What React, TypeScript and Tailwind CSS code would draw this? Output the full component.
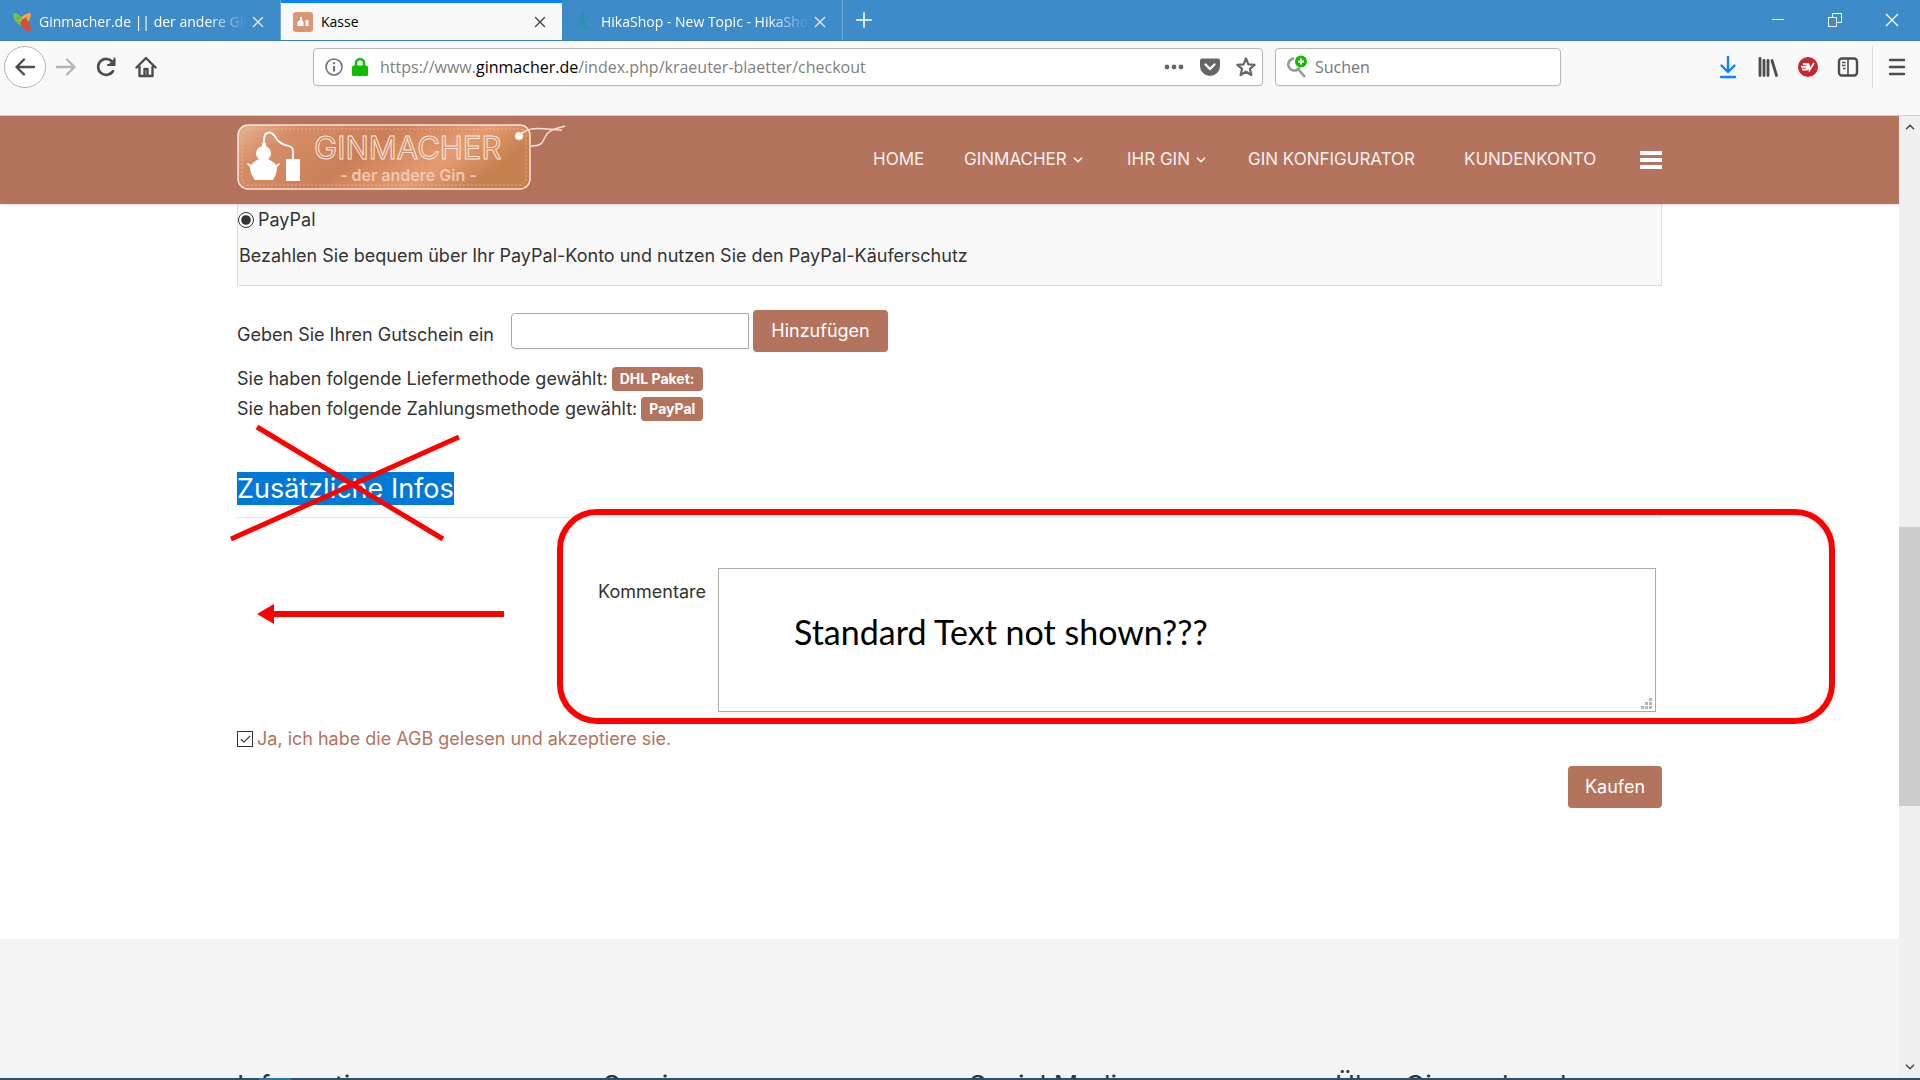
import { useState } from 'react';
import type { ReactNode } from 'react';
import { Check, ChevronDown, ChevronUp, Plus, X } from 'lucide-react';

function JoomlaIcon() {
  return (
    <svg width="20" height="20" viewBox="0 0 20 20" fill="none" strokeWidth="3" strokeLinecap="round" strokeLinejoin="round">
      <path d="M3 17 C3 14 4 12 7 10 M3 17 C6 17 7 15 9 13" stroke="#4a86cf" />
      <path d="M17 3 C13 3 12 5 8 8 M17 3 C17 6 16 8 14 9" stroke="#f9a541" />
      <path d="M3 3 C3 7 4 8 8 12 M3 3 C6 3 7 5 9 7" stroke="#7ac143" />
      <path d="M17 17 C17 13 16 11 12 8 M17 17 C13 17 13 15 10 12 L14 8" stroke="#f44321" />
      <g strokeWidth="4">
        <path d="M3 3h.1" stroke="#7ac143" />
        <path d="M17 3h.1" stroke="#f9a541" />
        <path d="M17 17h.1" stroke="#f44321" />
        <path d="M3 17h.1" stroke="#4a86cf" />
      </g>
    </svg>
  );
}

function StillIcon() {
  return (
    <svg width="20" height="20" viewBox="0 0 20 20">
      <rect width="20" height="20" rx="3" fill="#dc9672" />
      <path d="M7 5h2v3l1.500 2v4h-6v-4L7 8zM12.500 8h3v6h-3z" fill="#fff" />
    </svg>
  );
}

function HikaIcon() {
  return (
    <svg width="18" height="20" viewBox="0 0 18 20" fill="none" stroke="#2a93a8" strokeWidth="1.500" strokeLinecap="round">
      <path d="M9 1v9M4 4l2 3M14 3l-2 4M2 10l13-2M8 10L3 17M10 10v6l6 1M6 14l6-1" />
    </svg>
  );
}

function BackIcon() {
  return (
    <svg width="22" height="22" viewBox="0 0 22 22" fill="none" stroke="currentColor" strokeWidth="2.400" strokeLinecap="round" strokeLinejoin="round">
      <path d="M20 11H2.500M10 3.500L2.500 11l7.500 7.500" />
    </svg>
  );
}

function ForwardIcon() {
  return (
    <svg width="22" height="22" viewBox="0 0 22 22" fill="none" stroke="currentColor" strokeWidth="2.400" strokeLinecap="round" strokeLinejoin="round">
      <path d="M2 11h17.500M12 3.500l7.500 7.500-7.500 7.500" />
    </svg>
  );
}

function ReloadIcon() {
  return (
    <svg width="22" height="22" viewBox="0 0 22 22" fill="none" stroke="currentColor" strokeWidth="2.600" strokeLinecap="round">
      <path d="M17.800 6.500A8 8 0 1 0 18 15" />
      <path d="M20 2v8h-8z" fill="currentColor" stroke="none" />
      <path d="M19.500 2.500v6.500h-6.500" strokeWidth="2" />
    </svg>
  );
}

function HomeIcon() {
  return (
    <svg width="22" height="22" viewBox="0 0 22 22" fill="none" stroke="currentColor" strokeWidth="2.400" strokeLinecap="round" strokeLinejoin="round">
      <path d="M1.500 11.500L11 2l9.500 9.500M4.500 11v9h13v-9" />
      <path d="M9.500 19v-6h3v6" strokeWidth="2.400" />
    </svg>
  );
}

function InfoIcon() {
  return (
    <svg width="20" height="20" viewBox="0 0 20 20" fill="none" stroke="#737373">
      <circle cx="10" cy="10" r="8" strokeWidth="1.600" />
      <path d="M10 9v5.500M10 5.200v2" strokeWidth="2.200" />
    </svg>
  );
}

function LockIcon() {
  return (
    <svg width="16" height="20" viewBox="0 0 16 20">
      <path d="M4 9V6a4 4 0 0 1 8 0v3" fill="none" stroke="#12bc00" strokeWidth="2.600" />
      <rect y="8.500" width="16" height="10.500" rx="1.500" fill="#12bc00" />
    </svg>
  );
}

function PocketIcon() {
  return (
    <svg width="20" height="20" viewBox="0 0 20 20">
      <path d="M2 1.500h16a2 2 0 0 1 2 2V9a10 10 0 0 1-20 0V3.500a2 2 0 0 1 2-2z" fill="#666" />
      <path d="M5.500 7.500L10 12l4.500-4.500" fill="none" stroke="#fff" strokeWidth="2.400" strokeLinecap="round" strokeLinejoin="round" />
    </svg>
  );
}

function StarIcon() {
  return (
    <svg width="20" height="20" viewBox="0 0 20 20" fill="none" stroke="#666" strokeWidth="2.200" strokeLinejoin="round">
      <path d="M10 1.500l2.400 5.800 6.200.5-4.700 4 1.500 6.200-5.400-3.300-5.400 3.300 1.500-6.200-4.700-4 6.200-.5z" />
    </svg>
  );
}

function SearchAddIcon() {
  return (
    <svg width="24" height="24" viewBox="0 0 24 24">
      <path d="M9 3.500a6 6 0 1 0 5.500 9M13 14l7 8" fill="none" stroke="#999" strokeWidth="2.600" />
      <circle cx="16" cy="6.500" r="6" fill="#12bc00" />
      <path d="M16 3.500v6M13 6.500h6" stroke="#fff" strokeWidth="2" />
    </svg>
  );
}

function DownloadIcon() {
  return (
    <svg width="20" height="24" viewBox="0 0 20 24" fill="none" stroke="#0a84ff" strokeWidth="2.400" strokeLinecap="round" strokeLinejoin="round">
      <path d="M10 2v14.500M3.500 10.500l6.500 6.500 6.500-6.500M3 22h14" />
    </svg>
  );
}

function LibraryIcon() {
  return (
    <svg width="22" height="22" viewBox="0 0 22 22" fill="none" stroke="#4d4d4d" strokeWidth="2.800" strokeLinecap="round">
      <path d="M3 2.500v17M7 4.500v15M11 4.500v15M15 4.500l4.500 15" />
    </svg>
  );
}

function VpnIcon() {
  return (
    <svg width="20" height="22" viewBox="0 0 20 22">
      <circle cx="10" cy="11" r="10" fill="#c8252c" />
      <path d="M5 8h5l-1 5.500H4M3 10.800h6M10.500 8l1 6L16 7" fill="none" stroke="#fff" strokeWidth="1.900" />
    </svg>
  );
}

function SidebarIcon() {
  return (
    <svg width="22" height="22" viewBox="0 0 22 22" fill="none" stroke="#4d4d4d" strokeWidth="2.400">
      <rect x="2" y="2.500" width="18" height="17" rx="3" />
      <path d="M11 3v16" strokeWidth="1.600" />
      <path d="M5 6.500h3.500M5 9.500h3.500M6 12.500h2.500" strokeWidth="1.500" />
    </svg>
  );
}

function MenuIcon() {
  return (
    <svg width="18" height="20" viewBox="0 0 18 20" stroke="#4d4d4d" strokeWidth="2.400" strokeLinecap="round">
      <path d="M2 3h14M2 10h14M2 17h14" />
    </svg>
  );
}

function Logo() {
  return (
    <svg width="330" height="72" viewBox="0 0 330 72" className="block">
      <defs>
        <linearGradient id="copper" x1="0" y1="0" x2="1" y2="0.300">
          <stop offset="0" stopColor="#e6b294" />
          <stop offset="0.200" stopColor="#d68d66" />
          <stop offset="0.500" stopColor="#cb7f58" />
          <stop offset="0.800" stopColor="#e59b72" />
          <stop offset="1" stopColor="#c5804f" />
        </linearGradient>
      </defs>
      <rect x="1" y="1" width="292" height="64" rx="10" fill="url(#copper)" stroke="#f8e4da" strokeWidth="1.500" />
      <rect x="5" y="5" width="284" height="56" rx="7" fill="none" stroke="#efc0a4" strokeWidth="0.700" strokeDasharray="2 2" />
      <path d="M27 20V15C28 6 35 7 39 14C44 24 56 19 56 27V36" fill="none" stroke="#fff" strokeWidth="1.800" />
      <path d="M25 19h4v3q5 3 5 7 0 4-3 6 6 3 8 6l3-2 1 1-3 3q0 7-4 13h-18q-5-6-5-13l-3-3 1-1 3 2q2-3 8-6-3-2-3-6 0-4 6-7zM49 35h14v22H49z" fill="#fff" />
      <text x="77" y="35" fill="none" stroke="#fae6dc" strokeWidth="1" fontSize="31" fontFamily="Inter, sans-serif">GINMACHER</text>
      <text x="103" y="57" fill="#f0c7b2" fontSize="16" fontWeight="600" fontFamily="Inter, sans-serif">- der andere Gin -</text>
      <circle cx="282" cy="12" r="4" fill="#fff" stroke="#f6cbb0" />
      <path d="M282 12C292 0 310 6 325 6M294 22C310 22 304 14 312 8C317 4 322 4 328 2" fill="none" stroke="#f8e4da" strokeWidth="1.500" />
    </svg>
  );
}

type TabProps = { icon: ReactNode; title: string; active?: boolean };

function Tab({ icon, title, active }: TabProps) {
  return (
    <div
      className={
        active
          ? 'flex w-[281px] items-center border-t-3 border-[#0a84ff] bg-[#f9f9fa] pr-3 pl-3 text-black'
          : 'flex w-[281px] items-center border-r border-[#6fa9d8] pt-[3px] pr-3 pl-3 text-white'
      }
    >
      <span className="flex w-6 shrink-0 items-center">{icon}</span>
      <span
        className={
          active
            ? 'min-w-0 flex-1 overflow-hidden pl-1 whitespace-nowrap'
            : 'min-w-0 flex-1 overflow-hidden mask-r-from-80% pl-[3px] whitespace-nowrap'
        }
      >
        {title}
      </span>
      <button aria-label="Tab schließen" className={active ? 'flex w-5 justify-center text-[#4d4d4d]' : 'flex w-5 justify-center text-[#d5e8f7]'}>
        <X size={18} strokeWidth={2} />
      </button>
    </div>
  );
}

function BrowserChrome() {
  return (
    <div className="shrink-0 border-b border-[#d2d2d2] bg-[#f9f9fa] font-['Open_Sans','Noto_Sans',sans-serif]">
      <div className="flex h-[41px] border-b border-[#3a7fb8] bg-[#3d8bc8] text-sm">
        <Tab icon={<JoomlaIcon />} title="Ginmacher.de || der andere Gin" />
        <Tab icon={<StillIcon />} title="Kasse" active />
        <Tab icon={<HikaIcon />} title="HikaShop - New Topic - HikaShop" />
        <button aria-label="Neuer Tab" className="flex w-[42px] items-center justify-center text-[#d5e8f7]">
          <Plus size={24} strokeWidth={2} />
        </button>
        <div className="ml-auto flex text-white">
          <button aria-label="Minimieren" className="flex w-[57px] items-center justify-center">
            <svg width="12" height="12" stroke="currentColor"><path d="M0 5.500h12" /></svg>
          </button>
          <button aria-label="Wiederherstellen" className="flex w-[57px] items-center justify-center">
            <svg width="14" height="14" fill="none" stroke="currentColor"><path d="M.5 4.500h8v9h-8zM4.500 4.500v-4h9v9h-5" /></svg>
          </button>
          <button aria-label="Schließen" className="flex w-[57px] items-center justify-center">
            <svg width="14" height="14" stroke="currentColor" strokeWidth="1.300"><path d="M1 1l12 12M13 1L1 13" /></svg>
          </button>
        </div>
      </div>

      <div className="flex h-[74px] pt-[5px] text-[#4d4d4d]">
        <div className="flex h-[42px] w-[309px] items-center pl-1">
          <button aria-label="Zurück" className="flex size-[42px] items-center justify-center rounded-full border border-[#b5b5b5] bg-white">
            <BackIcon />
          </button>
          <button aria-label="Vor" className="flex w-10 justify-center text-[#b5b5b5]"><ForwardIcon /></button>
          <button aria-label="Neu laden" className="flex w-10 justify-center"><ReloadIcon /></button>
          <button aria-label="Startseite" className="flex w-10 justify-center"><HomeIcon /></button>
        </div>
        <div className="mt-[2px] ml-1 flex h-[38px] flex-1 items-center rounded-sm border border-[#b8b8b8] bg-white pr-[6px] pl-2 shadow-xs">
          <span className="flex w-[58px] items-center gap-2 pl-[2px]"><InfoIcon /><LockIcon /></span>
          <p className="flex-1 text-base whitespace-nowrap text-[#808080]">
            https://www.<span className="text-black">ginmacher.de</span>/index.php/kraeuter-blaetter/checkout
          </p>
          <div className="flex items-center gap-4">
            <button aria-label="Seitenaktionen">
              <svg width="20" height="20" fill="#666"><circle cx="3" cy="10" r="2.400" /><circle cx="10" cy="10" r="2.400" /><circle cx="17" cy="10" r="2.400" /></svg>
            </button>
            <button aria-label="Pocket"><PocketIcon /></button>
            <button aria-label="Lesezeichen"><StarIcon /></button>
          </div>
        </div>
        <label className="mt-[2px] ml-3 flex h-[38px] w-[286px] items-center rounded-sm border border-[#b8b8b8] bg-white pl-[9px] shadow-xs">
          <SearchAddIcon />
          <input type="search" aria-label="Suchen" placeholder="Suchen" className="min-w-0 flex-1 pl-[6px] text-base outline-none placeholder:text-[#757575]" />
        </label>
        <div className="flex h-[42px] w-[359px] items-center justify-end">
          <button aria-label="Downloads" className="flex w-10 justify-center"><DownloadIcon /></button>
          <button aria-label="Bibliothek" className="flex w-10 justify-center"><LibraryIcon /></button>
          <button aria-label="VPN" className="flex w-10 justify-center"><VpnIcon /></button>
          <button aria-label="Sidebar" className="flex w-10 justify-center"><SidebarIcon /></button>
          <button aria-label="Menü" className="ml-1 flex h-full w-12 items-center justify-center border-l border-[#d8d8d8]"><MenuIcon /></button>
        </div>
      </div>
    </div>
  );
}

function SiteHeader() {
  return (
    <header className="relative z-10 bg-[#b4735d] shadow">
      <div className="mx-auto flex h-[88px] max-w-[1425px] items-center justify-between text-white">
        <a href="#home" aria-label="Ginmacher"><Logo /></a>
        <nav className="grid grid-cols-[91px_163px_121px_216px_176px_22px] items-center text-[17px] whitespace-nowrap text-[#fbf1ed]">
          <a href="#home">HOME</a>
          <a href="#ginmacher" className="flex items-center gap-1">GINMACHER <ChevronDown size={14} strokeWidth={3} /></a>
          <a href="#gin" className="flex items-center gap-1">IHR GIN <ChevronDown size={14} strokeWidth={3} /></a>
          <a href="#konfigurator">GIN KONFIGURATOR</a>
          <a href="#konto">KUNDENKONTO</a>
          <button aria-label="Menü öffnen" className="flex flex-col gap-[3px]">
            <span className="h-1 w-[22px] bg-white" />
            <span className="h-1 w-[22px] bg-white" />
            <span className="h-1 w-[22px] bg-white" />
          </button>
        </nav>
      </div>
    </header>
  );
}

function Badge({ children }: { children: ReactNode }) {
  return (
    <span className="inline-flex h-6 items-center rounded-sm bg-[#b4735d] px-2 text-sm font-bold text-white">
      {children}
    </span>
  );
}

function Checkout() {
  const [coupon, setCoupon] = useState('');
  const [accepted, setAccepted] = useState(true);

  return (
    <main className="relative mx-auto h-[735px] max-w-[1425px] text-lg text-[#333]">
      <div className="h-[82px] border border-t-0 border-[#ddd] bg-[#f9f9f9]">
        <label className="flex h-8 items-center gap-1">
          <input type="radio" name="payment" defaultChecked className="size-4 accent-[#333]" />
          PayPal
        </label>
        <p className="pl-[1px] leading-10">Bezahlen Sie bequem über Ihr PayPal-Konto und nutzen Sie den PayPal-Käuferschutz</p>
      </div>

      <div className="mt-6 flex h-[42px] items-center">
        <label htmlFor="coupon" className="w-[274px] pt-2">Geben Sie Ihren Gutschein ein</label>
        <input
          id="coupon"
          value={coupon}
          onChange={(e) => setCoupon(e.target.value)}
          className="mr-1 h-9 w-[238px] rounded-l border border-[#aaa] px-2 shadow-xs outline-none"
        />
        <button className="h-full w-[135px] rounded bg-[#b4735d] text-white">Hinzufügen</button>
      </div>

      <div className="mt-3 leading-[30px]">
        <p className="flex items-center gap-1">Sie haben folgende Liefermethode gewählt: <Badge>DHL Paket:</Badge></p>
        <p className="flex items-center gap-1">Sie haben folgende Zahlungsmethode gewählt: <Badge>PayPal</Badge></p>
      </div>

      <div className="mt-12 border-b border-[#e8e8e8] pb-3">
        <h2 className="w-fit bg-[#0078d7] text-[27px] leading-[33px] text-white">Zusätzliche Infos</h2>
      </div>

      <div className="mt-[50px] mr-[6px] flex gap-3">
        <label htmlFor="comment" className="w-[469px] pt-[10px] text-right">Kommentare</label>
        <div className="relative flex-1">
          <textarea id="comment" className="block h-36 w-full resize-none border border-[#aaa] p-2 shadow-xs outline-none" />
          <p className="absolute top-10 left-[76px] font-[Lato,sans-serif] text-[34px] leading-[48px] text-black">Standard Text not shown???</p>
          <svg width="11" height="11" className="absolute right-1 bottom-[3px]" fill="#b5b5b5">
            <path d="M8 0h3v3H8zM4 4h3v3H4zM8 4h3v3H8zM0 8h3v3H0zM4 8h3v3H4zM8 8h3v3H8z" />
          </svg>
        </div>
      </div>

      <div className="mt-3 flex h-[30px] items-center gap-1">
        <span className="grid size-4 place-items-center">
          <input
            type="checkbox"
            id="terms"
            checked={accepted}
            onChange={(e) => setAccepted(e.target.checked)}
            className="col-start-1 row-start-1 size-4 appearance-none border border-[#333] bg-white"
          />
          {accepted && <Check size={13} className="pointer-events-none col-start-1 row-start-1" />}
        </span>
        <label htmlFor="terms" className="text-[#b4735d]">Ja, ich habe die AGB gelesen und akzeptiere sie.</label>
      </div>

      <div className="mt-3 flex justify-end">
        <button className="h-[42px] w-[94px] rounded bg-[#b4735d] text-white">Kaufen</button>
      </div>

      {/* hand-drawn markup over the form */}
      <svg width="290" height="230" viewBox="0 0 290 230" className="pointer-events-none absolute top-[213px] -left-3" stroke="#f00" strokeWidth="5" fill="none">
        <path d="M32 10L218 122M234 20L6 122" />
        <path d="M44 197H279" strokeWidth="6" />
        <path d="M32 197L49 187V207z" fill="#f00" stroke="none" />
      </svg>
      <div className="pointer-events-none absolute top-[305px] -right-[173px] left-[320px] h-[215px] rounded-[40px] border-6 border-[#f00]" />
    </main>
  );
}

const footerColumns = ['Informationen', 'Service', 'Social Media', 'Über Ginmacher.de'];

function Scrollbar() {
  return (
    <div className="flex w-[21px] shrink-0 flex-col items-center bg-[#f0f0f0] text-[#555]">
      <ChevronUp size={14} strokeWidth={3} className="my-1" />
      <div className="flex w-full flex-1 flex-col">
        <div className="flex-389" />
        <div className="w-full flex-280 bg-[#cdcdcd]" />
        <div className="flex-250" />
      </div>
      <ChevronDown size={14} strokeWidth={3} className="my-1" />
    </div>
  );
}

export default function App() {
  return (
    <div className="flex h-screen flex-col overflow-hidden bg-white">
      <BrowserChrome />
      <div className="flex min-h-0 flex-1">
        <div className="min-w-0 flex-1 overflow-hidden font-[Inter,sans-serif]">
          <SiteHeader />
          <Checkout />
          <footer className="bg-[#f4f4f4] pt-[130px] pb-10">
            <div className="mx-auto max-w-[1425px]">
              <div className="-mr-[39px] grid grid-cols-4 text-[27px] leading-[33px] text-[#333]">
                {footerColumns.map((title) => (
                  <h3 key={title}>{title}</h3>
                ))}
              </div>
            </div>
          </footer>
        </div>
        <Scrollbar />
      </div>
      <div className="flex h-[2px] shrink-0 bg-[#2a5070]">
        <div className="ml-[259px] w-8 bg-[#2a75ad]" />
      </div>
    </div>
  );
}
